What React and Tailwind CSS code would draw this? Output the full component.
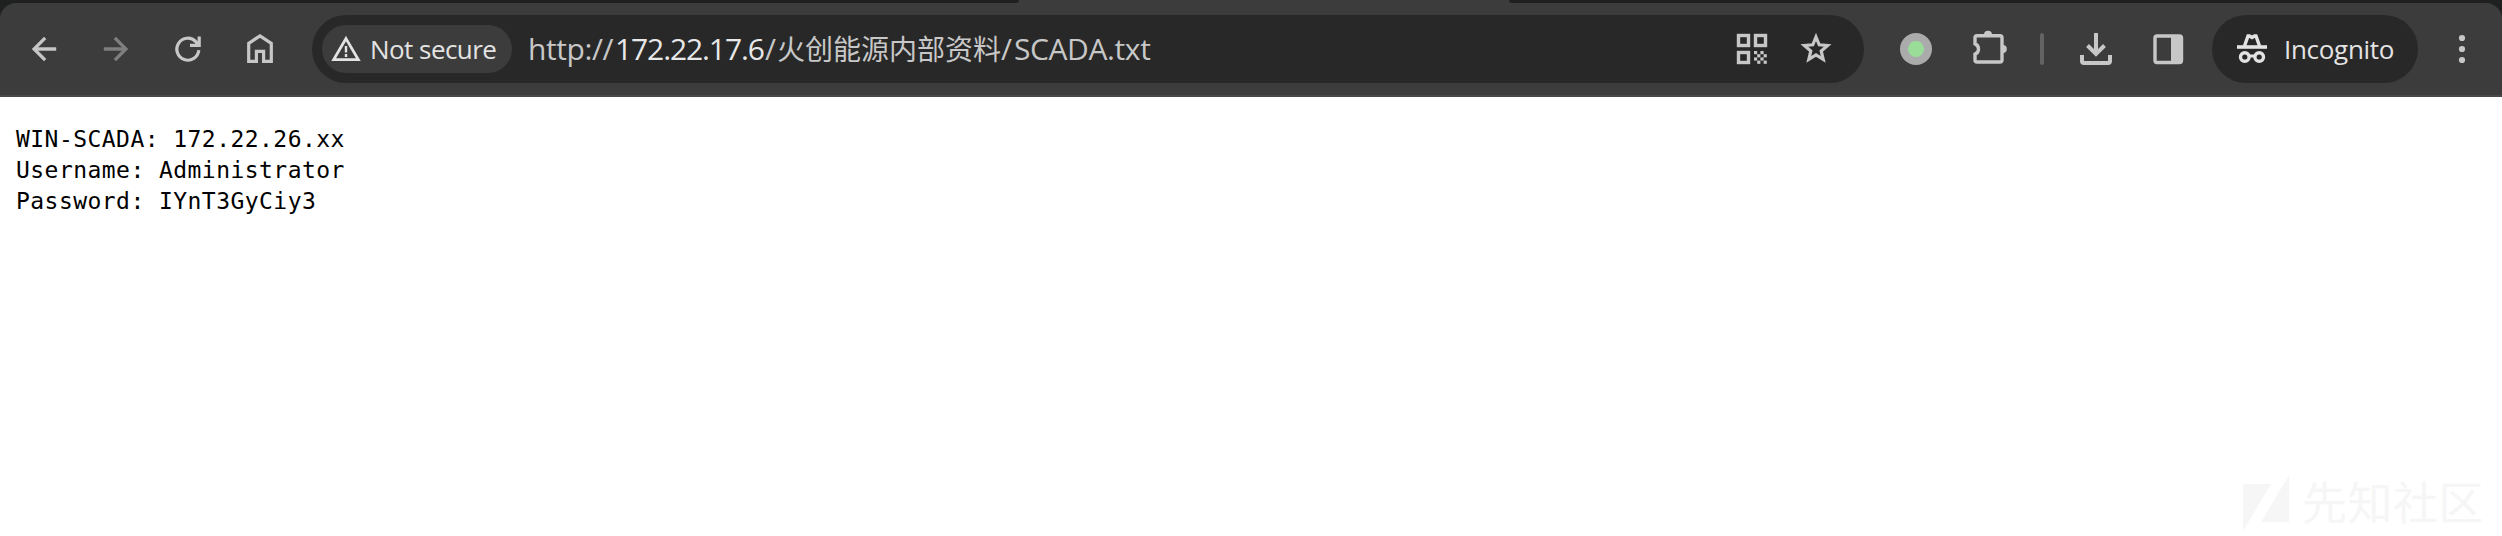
const ICON = '#c7c7c7';

function Icon({ x, w, className = '', children }) {
  return (
    <svg className={`shrink-0 ${className}`} width={w} height="40" viewBox={`${x} 29 ${w} 40`} fill="none">
      {children}
    </svg>
  );
}

function Arrow({ className, flip }) {
  return (
    <svg className={`shrink-0 w-9 h-9 ${className}`} viewBox="0 0 24 24" fill="currentColor" stroke="currentColor" strokeWidth="0.3">
      <path
        transform={flip ? 'translate(24 0) scale(-1 1)' : undefined}
        d="M20 11H7.83l5.59-5.59L12 4l-8 8 8 8 1.41-1.41L7.83 13H20v-2z"
      />
    </svg>
  );
}

function NavButtons() {
  return (
    <div className="flex items-center w-[312px] pl-[26px] text-[#c7c7c7]">
      <Arrow />
      <Arrow flip className="ml-9 text-[#7f7f7f]" />
      <Icon x={170} w={36} className="ml-9">
        <path d="M198.8 50.2A11 11 0 1 1 195.8 41.6L198.5 44.5" stroke={ICON} strokeWidth="3.2" />
        <path d="M199.2 36.5V45.3H190" stroke={ICON} strokeWidth="3.2" />
        <path d="M194 45L199 39.5V45Z" fill={ICON} />
      </Icon>
      <Icon x={242} w={36} className="ml-9">
        <path d="M248.7 61.3V43.3L260 35.8L271.3 43.3V61.3H263.6V51.3H256.4V61.3Z" stroke={ICON} strokeWidth="3.2" />
      </Icon>
    </div>
  );
}

const checker = [
  [0, 0], [2, 0], [1, 1], [3, 1], [0, 2], [2, 2], [1, 3], [3, 3],
];

function Omnibox() {
  return (
    <div className="flex items-center w-[1552px] h-[68px] rounded-full bg-[#282828] pl-[10px]">
      <div className="flex items-center w-[190px] h-12 rounded-full bg-[#3c3c3c] pl-[8px]">
        <Icon x={330} w={32}>
          <path d="M346 38.6L358.3 59.6H333.7Z" stroke="#e3e3e3" strokeWidth="2.8" />
          <path d="M346 46V52.5M346 54V57" stroke="#e3e3e3" strokeWidth="2.4" />
        </Icon>
        <span className="ml-[8px] text-[26px] leading-[36px] tracking-[-0.55px] whitespace-nowrap text-[#e3e3e3]">
          Not secure
        </span>
      </div>
      <div className="flex items-baseline ml-[16px] w-[1200px] text-[30px] leading-[44px] whitespace-nowrap text-[#c7c7c7]">
        <span className="w-[87px] tracking-[-0.4px]">http://</span>
        <span className="w-[150px] tracking-[-1.1px] text-[#e8e8e8]">172.22.17.6</span>
        <span className="w-[12px]">/</span>
        <span className="w-[224px] text-[28px]">火创能源内部资料</span>
        <span className="w-[13px]">/</span>
        <span className="tracking-[-0.4px]">SCADA.txt</span>
      </div>
      <Icon x={1732} w={40} className="ml-[4px]">
        {[[1738.5, 35.5], [1755.5, 35.5], [1738.5, 52.5]].map(([x, y]) => (
          <rect key={`${x}-${y}`} x={x} y={y} width="10" height="10" stroke={ICON} strokeWidth="3.4" />
        ))}
        {checker.map(([c, r]) => (
          <rect key={`${c}${r}`} x={1754 + c * 3.2} y={51 + r * 3.2} width="3.2" height="3.2" fill={ICON} />
        ))}
      </Icon>
      <Icon x={1796} w={40} className="ml-6">
        <path d="M1816 37L1819.2 44.8L1827.6 45.5L1821.2 51L1823.2 59.3L1816 54.9L1808.8 59.3L1810.8 51L1804.4 45.5L1812.8 44.8Z" stroke={ICON} strokeWidth="3.2" />
      </Icon>
    </div>
  );
}

function Actions() {
  return (
    <div className="flex items-center flex-1">
      <Icon x={1896} w={40} className="ml-8">
        <circle cx="1916" cy="49" r="16" fill="#ababab" />
        <circle cx="1916" cy="49" r="8" fill="#99dd99" />
      </Icon>
      <Icon x={1970} w={40} className="ml-[34px]">
        <path d="M1977 35.8H2000a2 2 0 0 1 2 2V60a2 2 0 0 1 -2 2H1977a2 2 0 0 1 -2 -2V54.2a5.6 5.6 0 0 0 0 -10.400V37.8a2 2 0 0 1 2 -2Z" stroke={ICON} strokeWidth="3.4" />
        <path d="M1984 34.800a4 4 0 0 1 8 0ZM2002.8 45a4 4 0 0 1 0 8Z" fill={ICON} />
      </Icon>
      <div className="ml-[30px] w-1 h-8 rounded-full bg-[#636363]" />
      <Icon x={2076} w={40} className="ml-8">
        <path d="M2096 33V54M2087.5 45.5L2096 54L2104.5 45.5M2082 55V61a2 2 0 0 0 2 2H2108a2 2 0 0 0 2 -2V55" stroke={ICON} strokeWidth="4" />
      </Icon>
      <Icon x={2148} w={40} className="ml-8">
        <rect x="2155" y="36" width="26.500" height="26.500" rx="2" stroke={ICON} strokeWidth="3.4" />
        <path d="M2171 36H2181V62H2171Z" fill={ICON} />
      </Icon>
      <div className="flex items-center ml-6 w-[206px] h-[68px] rounded-full bg-[#282828] pl-[20px]">
        <Icon x={2232} w={40}>
          <path d="M2237 47H2267" stroke="#e3e3e3" strokeWidth="3.600" />
          <path d="M2244.500 46L2248 36H2249.500L2252 37.500L2254.500 36H2256L2259.500 46" stroke="#e3e3e3" strokeWidth="3.4" />
          <circle cx="2244.800" cy="57" r="4.300" stroke="#e3e3e3" strokeWidth="3.400" />
          <circle cx="2259.200" cy="57" r="4.300" stroke="#e3e3e3" strokeWidth="3.400" />
          <path d="M2249 56H2255" stroke="#e3e3e3" strokeWidth="3" />
        </Icon>
        <span className="ml-[12px] text-[26px] leading-[36px] tracking-[-0.3px] text-[#e3e3e3]">Incognito</span>
      </div>
      <Icon x={2442} w={40} className="ml-6">
        {[38, 49, 60].map((y) => (
          <circle key={y} cx="2462" cy={y} r="3.100" fill={ICON} />
        ))}
      </Icon>
    </div>
  );
}

export default function App() {
  return (
    <div className="flex flex-col w-[2502px] h-[536px] bg-white overflow-hidden font-['Open_Sans','Noto_Sans_CJK_SC',sans-serif]">
      <div className="bg-[#1f2120]">
        <div className="flex justify-between h-[3px] bg-[#3c3c3c]">
          <div className="w-[1019px] bg-[#1f2120] rounded-br-[3px]" />
          <div className="w-[993px] bg-[#1f2120] rounded-bl-[3px]" />
        </div>
        <div className="flex items-center h-[94px] rounded-t-2xl bg-[#3c3c3c] border-b-2 border-[#4a474a]">
          <NavButtons />
          <Omnibox />
          <Actions />
        </div>
      </div>
      <pre className="mt-[27px] ml-4 text-[23px] leading-[31px] tracking-[0.45px] text-black font-['DejaVu_Sans_Mono',monospace]">
        {'WIN-SCADA: 172.22.26.xx\nUsername: Administrator\nPassword: IYnT3GyCiy3'}
      </pre>
      <div className="flex items-center self-end mt-auto h-[66px] mr-[18px] text-[#f6f6f6]">
        <svg width="46" height="58" viewBox="0 0 46 58" fill="currentColor">
          <path d="M0 10H28L0 57ZM46 1V48H18Z" />
        </svg>
        <span className="ml-[13px] w-[182px] text-[45px] leading-[66px] tracking-[0.500px] whitespace-nowrap">先知社区</span>
      </div>
    </div>
  );
}
